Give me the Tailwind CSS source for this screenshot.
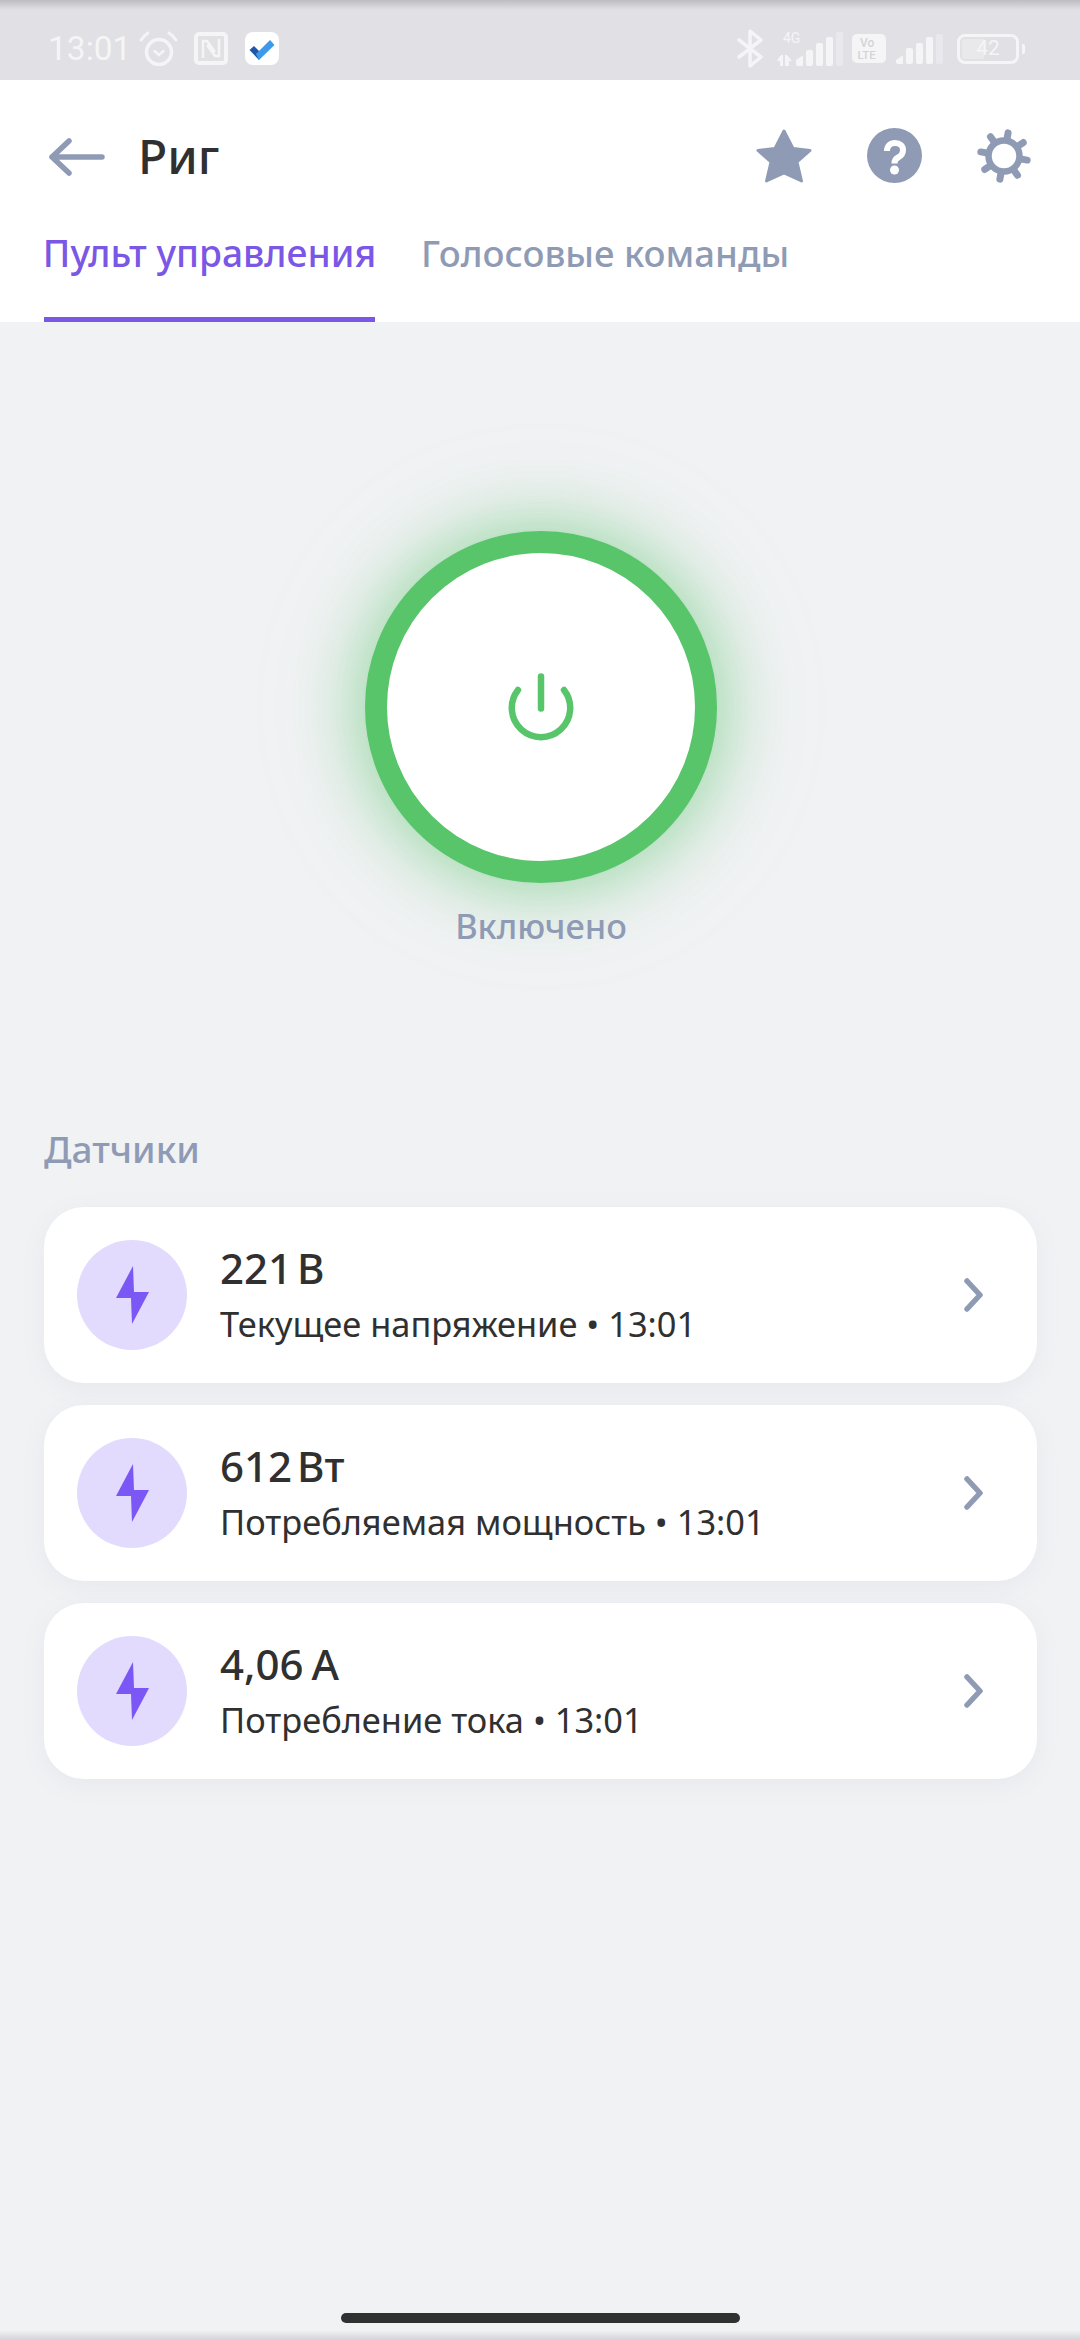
<!DOCTYPE html>
<html lang="ru"><head><meta charset="utf-8"><script src="https://cdn.jsdelivr.net/npm/@tailwindcss/browser@4"></script></head>
<body class="m-0">
<div class="relative flex h-[2340px] w-[1080px] flex-col overflow-hidden bg-[#f1f2f4] font-['Noto_Sans',sans-serif]">
  <div class="pointer-events-none absolute inset-x-0 top-0 z-10 h-[10px] bg-gradient-to-b from-[#bdbcc1] to-transparent"></div>
  <div class="pointer-events-none absolute inset-x-0 bottom-0 z-10 h-[10px] bg-gradient-to-t from-[#d3d4d7] to-transparent"></div>

  <!-- status bar -->
  <div class="flex h-[80px] shrink-0 items-center justify-between bg-[#e1e0e5] pl-[48px] pr-[55px] pt-[17px]">
    <div class="flex items-center">
      <span class="w-[91px] font-['Roboto',sans-serif] text-[33.5px] leading-none text-[#f5f5f7]">13:01</span>
      <svg width="39" height="35" viewBox="0 0 39 35" fill="none" stroke="#f5f5f7" stroke-width="3.500" stroke-linecap="round" stroke-linejoin="round"><circle cx="20" cy="21" r="12.500"/><path d="M15.500 20l4.500 4 4.500-4" stroke-width="2.500"/><path d="M2 9c2-3 4-5 7-7M37 9c-2-3-4-5-7-7" stroke-width="3"/></svg>
      <svg class="ml-[16px]" width="34" height="33" viewBox="0 0 34 33" fill="none" stroke="#f5f5f7"><rect x="2" y="2" width="30" height="29" rx="3" stroke-width="4"/><path d="M9 26V9h4l8 11M25 7v17h-4l-8-11" stroke-width="2.500"/></svg>
      <svg class="ml-[17px]" width="34" height="33" viewBox="0 0 34 33"><rect width="34" height="33" rx="8" fill="#fff"/><path d="M4.500 18L9 14l7 7-2 7z" fill="#1f57a8"/><path d="M11 22L25 8l4.500 5L14 28z" fill="#3d9ae8"/></svg>
    </div>
    <div class="flex items-center">
      <svg width="26" height="39" viewBox="0 0 26 39" fill="none" stroke="#f5f5f7" stroke-width="3.500" stroke-linejoin="round" stroke-linecap="round"><path d="M2 11l22 17-11 9V2l11 9L2 28"/></svg>
      <div class="relative ml-[14px] h-[34px] w-[69px]">
        <span class="absolute left-[6px] top-[-2px] font-['Roboto',sans-serif] text-[14px] leading-[16px] text-[#f5f5f7]">4G</span>
        <svg class="absolute inset-0" width="69" height="34" viewBox="0 0 69 34" fill="#f5f5f7"><path d="M0 29l3-5h1v-1h2v11H3v-5zM8 23h2l5 6h-3v5H8z"/><path d="M19 28l6-4h1v10h-6a2 2 0 0 1-1-2z"/><rect x="29" y="18" width="7" height="16" rx="2"/><rect x="39" y="11" width="7" height="23" rx="2"/><rect x="49" y="5" width="7" height="29" rx="2"/><rect x="59" y="0" width="7" height="34" rx="2" fill="#e9e9ed"/></svg>
      </div>
      <svg class="ml-[6px]" width="34" height="29" viewBox="0 0 34 29"><rect width="34" height="29" rx="5" fill="#f5f5f7"/><text x="8" y="13" font-size="12" font-family="Roboto" font-weight="500" fill="#d4d3d9">Vo</text><text x="5.500" y="25" font-size="11.500" font-family="Roboto" font-weight="500" fill="#d4d3d9">LTE</text></svg>
      <svg class="ml-[10px]" width="48" height="30" viewBox="0 0 48 30" fill="#f5f5f7"><path d="M0 26l6-4h1v8H2a2 2 0 0 1-2-2z"/><rect x="10" y="14" width="7" height="16" rx="2"/><rect x="20" y="9" width="7" height="21" rx="2"/><rect x="30" y="3" width="7" height="27" rx="2"/><rect x="40" y="0" width="7" height="30" rx="2" fill="#e9e9ed"/></svg>
      <div class="relative ml-[13px] flex h-[30px] w-[62px] items-center justify-center overflow-hidden rounded-[8px] border-[3.5px] border-[#f5f5f7] font-['Roboto',sans-serif] text-[21px] leading-none text-[#f5f5f7]"><div class="absolute inset-y-[2px] left-[2px] w-[22px] rounded-[2px] bg-[#e9e9ec]"></div><span class="relative">42</span></div>
      <div class="ml-[3px] h-[10px] w-[3px] rounded-r-[2px] bg-[#f5f5f7]"></div>
    </div>
  </div>

  <!-- header -->
  <div class="flex h-[242px] shrink-0 flex-col bg-white">
    <div class="flex h-[151px] items-start pl-[49px] pr-[49px] pt-[48px]">
      <svg class="mt-[10px]" width="56" height="38" viewBox="0 0 56 38" fill="none" stroke="#8f9bb5" stroke-width="5.500" stroke-linecap="round" stroke-linejoin="round"><path d="M53 19H3M20 3L3 19l17 16"/></svg>
      <span class="ml-[33px] text-[48px] font-medium leading-[56px] text-[#303030]">Риг</span>
      <div class="ml-auto flex items-center">
        <svg width="56" height="54" viewBox="0 0 56 54" fill="#8f9bb5" stroke="#8f9bb5" stroke-width="3" stroke-linejoin="round"><path d="M28 2l9 17.500L54 21.500 41 33l4.500 19L28 44 10.500 52 15 33 2 21.500 19 19.500z"/></svg>
        <svg class="ml-[55px]" width="55" height="55" viewBox="0 0 55 55"><circle cx="27.500" cy="27.500" r="27.500" fill="#8f9bb5"/><path d="M20 23c0-5 3-8 8-8s8 3 8 7-2 6-5 7.500-3.500 3-3.500 6" fill="none" stroke="#fff" stroke-width="6"/><circle cx="27.500" cy="42" r="4.500" fill="#fff"/></svg>
        <svg class="ml-[55px]" width="54" height="54" viewBox="0 0 54 54" fill="none" stroke="#8f9bb5"><circle cx="27" cy="27" r="15.500" stroke-width="6.500"/><g stroke-width="7" stroke-linecap="round"><path d="M27 9V3.500" transform="rotate(10 27 27)"/><path d="M27 9V3.500" transform="rotate(55 27 27)"/><path d="M27 9V3.500" transform="rotate(100 27 27)"/><path d="M27 9V3.500" transform="rotate(145 27 27)"/><path d="M27 9V3.500" transform="rotate(190 27 27)"/><path d="M27 9V3.500" transform="rotate(235 27 27)"/><path d="M27 9V3.500" transform="rotate(280 27 27)"/><path d="M27 9V3.500" transform="rotate(325 27 27)"/></g></svg>
      </div>
    </div>
    <div class="flex flex-1 items-stretch pl-[44px] text-[36.5px] font-medium leading-[44px]">
      <div class="flex h-[91px] w-[331px] justify-center whitespace-nowrap border-b-[5px] border-[#7b57e6] text-[37.2px] text-[#7b57e6]">Пульт управления</div>
      <div class="ml-[46px] whitespace-nowrap text-[#8f9bb5]">Голосовые команды</div>
    </div>
  </div>

  <!-- power -->
  <div class="flex shrink-0 flex-col items-center pl-[2px] pt-[209px]">
    <div class="flex h-[352px] w-[352px] items-center justify-center rounded-full border-[22px] border-[#58c56b] bg-white shadow-[0_0_60px_8px_rgba(88,197,107,0.48),0_0_110px_20px_rgba(88,197,107,0.10)]">
      <svg width="66" height="68" viewBox="0 0 66 68" fill="none" stroke="#58c56b" stroke-width="6.500" stroke-linecap="round"><path d="M33 3.500v32"/><path d="M10 17a29.200 29.200 0 1 0 46 0"/></svg>
    </div>
    <span class="mt-[20px] text-[34.3px] font-medium leading-[46px] text-[#8f9bb5]">Включено</span>
  </div>

  <!-- sensors -->
  <div class="flex flex-col pl-[44px] pr-[43px] pt-[175px]">
    <div class="text-[37px] font-medium leading-[50px] text-[#8f9bb5]">Датчики</div>
    <div class="mt-[33px] flex flex-col gap-[22px]">
      <div class="flex h-[176px] items-center rounded-[40px] bg-white pl-[33px] pr-[54px] shadow-[0_6px_24px_rgba(120,130,160,0.08)]">
        <div class="flex h-[110px] w-[110px] shrink-0 items-center justify-center rounded-full bg-[#e2dbfd]"><svg width="33" height="58" viewBox="0 0 33 58" fill="#7b57f5"><path d="M17 0L0 32h15l1 26 17-32H18z"/></svg></div>
        <div class="ml-[33px] flex flex-col pb-[2px]"><span class="mb-[6px] text-[42px] font-medium leading-[54px] text-[#303030] [word-spacing:-6px]">221 В</span><span class="text-[34.4px] leading-[46px] text-[#303030]">Текущее напряжение • 13:01</span></div>
        <svg class="ml-auto" width="19" height="34" viewBox="0 0 19 34" fill="none" stroke="#8f9bb5" stroke-width="5.500" stroke-linecap="round" stroke-linejoin="round"><path d="M3 3l13 14L3 31"/></svg>
      </div>
      <div class="flex h-[176px] items-center rounded-[40px] bg-white pl-[33px] pr-[54px] shadow-[0_6px_24px_rgba(120,130,160,0.08)]">
        <div class="flex h-[110px] w-[110px] shrink-0 items-center justify-center rounded-full bg-[#e2dbfd]"><svg width="33" height="58" viewBox="0 0 33 58" fill="#7b57f5"><path d="M17 0L0 32h15l1 26 17-32H18z"/></svg></div>
        <div class="ml-[33px] flex flex-col pb-[2px]"><span class="mb-[6px] text-[42px] font-medium leading-[54px] text-[#303030] [word-spacing:-6px]">612 Вт</span><span class="text-[34.4px] leading-[46px] text-[#303030]">Потребляемая мощность • 13:01</span></div>
        <svg class="ml-auto" width="19" height="34" viewBox="0 0 19 34" fill="none" stroke="#8f9bb5" stroke-width="5.500" stroke-linecap="round" stroke-linejoin="round"><path d="M3 3l13 14L3 31"/></svg>
      </div>
      <div class="flex h-[176px] items-center rounded-[40px] bg-white pl-[33px] pr-[54px] shadow-[0_6px_24px_rgba(120,130,160,0.08)]">
        <div class="flex h-[110px] w-[110px] shrink-0 items-center justify-center rounded-full bg-[#e2dbfd]"><svg width="33" height="58" viewBox="0 0 33 58" fill="#7b57f5"><path d="M17 0L0 32h15l1 26 17-32H18z"/></svg></div>
        <div class="ml-[33px] flex flex-col pb-[2px]"><span class="mb-[6px] text-[42px] font-medium leading-[54px] text-[#303030] [word-spacing:-3px]">4,06 А</span><span class="text-[34.4px] leading-[46px] text-[#303030]">Потребление тока • 13:01</span></div>
        <svg class="ml-auto" width="19" height="34" viewBox="0 0 19 34" fill="none" stroke="#8f9bb5" stroke-width="5.500" stroke-linecap="round" stroke-linejoin="round"><path d="M3 3l13 14L3 31"/></svg>
      </div>
    </div>
  </div>

  <!-- home indicator -->
  <div class="mt-auto mb-[17px] flex justify-center"><div class="h-[10px] w-[399px] rounded-full bg-[#303131]"></div></div>
</div>
</body></html>
